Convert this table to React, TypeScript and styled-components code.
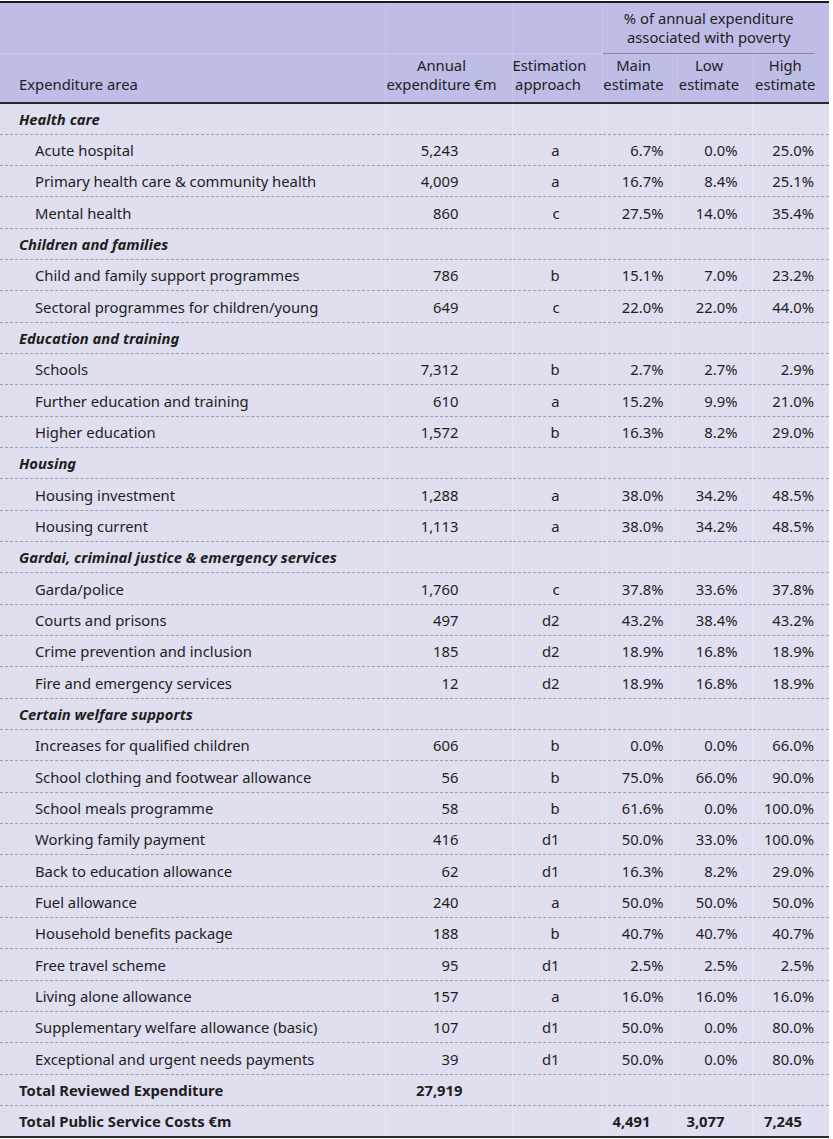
import React from "react";
import styled, { createGlobalStyle } from "styled-components";

const Global = createGlobalStyle`
  html, body { margin: 0; padding: 0; background: #ffffff; }
  body { font-family: "Noto Sans", "Open Sans", sans-serif; color: #1e1e1e; }
`;

const Wrap = styled.div`
  padding-top: 1px;
  width: 829px;
`;

const Table = styled.table`
  width: 829px;
  table-layout: fixed;
  border-collapse: collapse;
  font-size: 14.8px;
  line-height: 19px;
  border-top: 2.5px solid #1c1c1c;
  border-bottom: 2px solid #2a2a2a;
`;

const Head = styled.thead`
  background: #bdbde6;
  border-bottom: 2px solid #2a2a2a;
`;

const HeadCell = styled.th<{ $align?: string; $pl?: number; $pr?: number; $top?: boolean }>`
  font-weight: 400;
  text-align: ${(p) => p.$align || "center"};
  vertical-align: bottom;
  padding: ${(p) => (p.$top ? "5px 0 6px 0" : "2px 0 8px 0")};
  padding-left: ${(p) => p.$pl ?? 0}px;
  padding-right: ${(p) => p.$pr ?? 0}px;
  height: ${(p) => (p.$top ? 39 : 37)}px;
  border-right: 1px solid rgba(255, 255, 255, 0.12);
  border-bottom: ${(p) => (p.$top ? "1px solid rgba(255,255,255,0.18)" : "none")};
  &:last-child { border-right: none; }
`;

const GroupCell = styled.th`
  font-weight: 400;
  text-align: center;
  vertical-align: bottom;
  padding: 5px 14px 0 0;
  height: 45px;
`;

const GroupLabel = styled.div`
  padding: 0 0 6px 0;
  border-bottom: 1px solid #8a8aa6;
`;

const Body = styled.tbody`
  background: #dfdff0;
`;

const Row = styled.tr<{ $last?: boolean }>`
  height: 31.34px;
  border-bottom: ${(p) => (p.$last ? "none" : "1px dashed #9d9db0")};
`;

const Cell = styled.td<{ $align?: string; $pl?: number; $pr?: number; $bold?: boolean; $italic?: boolean }>`
  padding: 0;
  padding-top: 1px;
  padding-left: ${(p) => p.$pl ?? 0}px;
  padding-right: ${(p) => p.$pr ?? 0}px;
  text-align: ${(p) => p.$align || "left"};
  font-weight: ${(p) => (p.$bold ? 700 : 400)};
  font-style: ${(p) => (p.$italic ? "italic" : "normal")};
  white-space: nowrap;
  border-right: 1px solid rgba(255, 255, 255, 0.22);
  &:last-child { border-right: none; }
`;

type Item = { kind: "item"; label: string; v: [string, string, string, string, string] };
type Section = { kind: "section"; label: string };
type RowData = Item | Section;

const sec = (label: string): Section => ({ kind: "section", label });
const it = (label: string, a: string, b: string, c: string, d: string, e: string): Item => ({
  kind: "item",
  label,
  v: [a, b, c, d, e],
});

const rows: RowData[] = [
  sec("Health care"),
  it("Acute hospital", "5,243", "a", "6.7%", "0.0%", "25.0%"),
  it("Primary health care & community health", "4,009", "a", "16.7%", "8.4%", "25.1%"),
  it("Mental health", "860", "c", "27.5%", "14.0%", "35.4%"),
  sec("Children and families"),
  it("Child and family support programmes", "786", "b", "15.1%", "7.0%", "23.2%"),
  it("Sectoral programmes for children/young", "649", "c", "22.0%", "22.0%", "44.0%"),
  sec("Education and training"),
  it("Schools", "7,312", "b", "2.7%", "2.7%", "2.9%"),
  it("Further education and training", "610", "a", "15.2%", "9.9%", "21.0%"),
  it("Higher education", "1,572", "b", "16.3%", "8.2%", "29.0%"),
  sec("Housing"),
  it("Housing investment", "1,288", "a", "38.0%", "34.2%", "48.5%"),
  it("Housing current", "1,113", "a", "38.0%", "34.2%", "48.5%"),
  sec("Gardai, criminal justice & emergency services"),
  it("Garda/police", "1,760", "c", "37.8%", "33.6%", "37.8%"),
  it("Courts and prisons", "497", "d2", "43.2%", "38.4%", "43.2%"),
  it("Crime prevention and inclusion", "185", "d2", "18.9%", "16.8%", "18.9%"),
  it("Fire and emergency services", "12", "d2", "18.9%", "16.8%", "18.9%"),
  sec("Certain welfare supports"),
  it("Increases for qualified children", "606", "b", "0.0%", "0.0%", "66.0%"),
  it("School clothing and footwear allowance", "56", "b", "75.0%", "66.0%", "90.0%"),
  it("School meals programme", "58", "b", "61.6%", "0.0%", "100.0%"),
  it("Working family payment", "416", "d1", "50.0%", "33.0%", "100.0%"),
  it("Back to education allowance", "62", "d1", "16.3%", "8.2%", "29.0%"),
  it("Fuel allowance", "240", "a", "50.0%", "50.0%", "50.0%"),
  it("Household benefits package", "188", "b", "40.7%", "40.7%", "40.7%"),
  it("Free travel scheme", "95", "d1", "2.5%", "2.5%", "2.5%"),
  it("Living alone allowance", "157", "a", "16.0%", "16.0%", "16.0%"),
  it("Supplementary welfare allowance (basic)", "107", "d1", "50.0%", "0.0%", "80.0%"),
  it("Exceptional and urgent needs payments", "39", "d1", "50.0%", "0.0%", "80.0%"),
];

const valuePads = [53, 42, 13, 14, 15];

export default function App() {
  return (
    <Wrap>
      <Global />
      <Table>
        <colgroup>
          <col style={{ width: 385 }} />
          <col style={{ width: 127 }} />
          <col style={{ width: 90 }} />
          <col style={{ width: 75 }} />
          <col style={{ width: 75 }} />
          <col style={{ width: 77 }} />
        </colgroup>
        <Head>
          <tr>
            <HeadCell $top />
            <HeadCell $top />
            <HeadCell $top />
            <GroupCell colSpan={3}>
              <GroupLabel>
                % of annual expenditure
                <br />
                associated with poverty
              </GroupLabel>
            </GroupCell>
          </tr>
          <tr>
            <HeadCell $align="left" $pl={19}>Expenditure area</HeadCell>
            <HeadCell $pr={14}>
              Annual
              <br />
              expenditure €m
            </HeadCell>
            <HeadCell $pr={18}>
              Estimation
              <br />
              approach
            </HeadCell>
            <HeadCell $pr={12}>
              Main
              <br />
              estimate
            </HeadCell>
            <HeadCell $pr={11}>
              Low
              <br />
              estimate
            </HeadCell>
            <HeadCell $pr={11}>
              High
              <br />
              estimate
            </HeadCell>
          </tr>
        </Head>
        <Body>
          {rows.map((r, i) =>
            r.kind === "section" ? (
              <Row key={i}>
                <Cell $pl={19} $bold $italic>
                  {r.label}
                </Cell>
                <Cell />
                <Cell />
                <Cell />
                <Cell />
                <Cell />
              </Row>
            ) : (
              <Row key={i}>
                <Cell $pl={35}>{r.label}</Cell>
                {r.v.map((v, j) => (
                  <Cell key={j} $align="right" $pr={valuePads[j]}>
                    {v}
                  </Cell>
                ))}
              </Row>
            )
          )}
          <Row>
            <Cell $pl={19} $bold>
              Total Reviewed Expenditure
            </Cell>
            <Cell $align="right" $pr={49} $bold>
              27,919
            </Cell>
            <Cell />
            <Cell />
            <Cell />
            <Cell />
          </Row>
          <Row $last>
            <Cell $pl={19} $bold>
              Total Public Service Costs €m
            </Cell>
            <Cell />
            <Cell />
            <Cell $align="right" $pr={26} $bold>
              4,491
            </Cell>
            <Cell $align="right" $pr={27} $bold>
              3,077
            </Cell>
            <Cell $align="right" $pr={27} $bold>
              7,245
            </Cell>
          </Row>
        </Body>
      </Table>
    </Wrap>
  );
}
